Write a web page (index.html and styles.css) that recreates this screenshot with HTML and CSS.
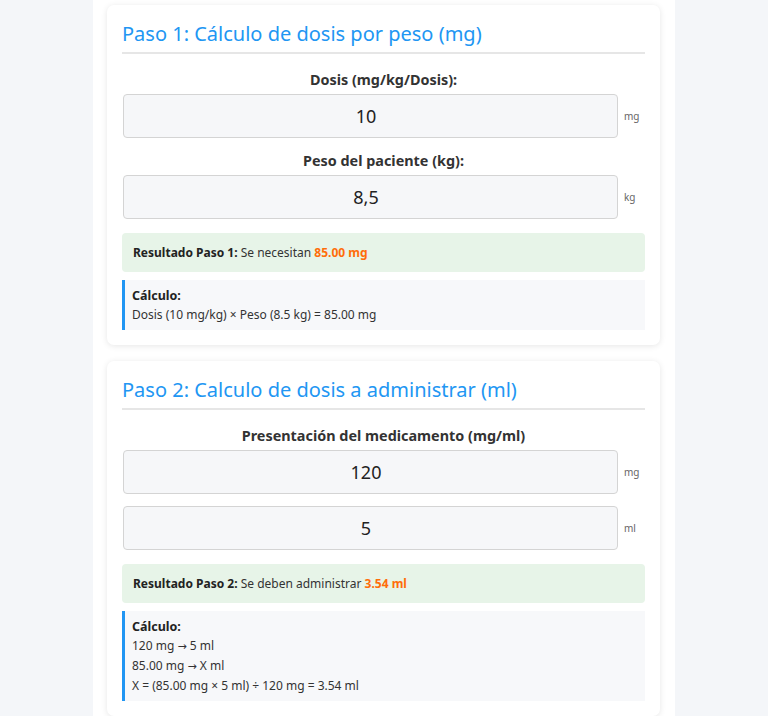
FILE: index.html
```html
<!DOCTYPE html>
<html lang="es">
<head>
  <meta charset="UTF-8">
  <meta name="viewport" content="width=device-width, initial-scale=1.0">
  <title>Calculadora de dosis</title>
  <link rel="stylesheet" href="styles.css">
</head>
<body>
  <div class="container">
    <!-- Paso 1 -->
    <div class="step">
      <h2>Paso 1: Cálculo de dosis por peso (mg)</h2>
      <div class="form-group">
        <label for="dosis">Dosis (mg/kg/Dosis):</label>
        <div class="input-row">
          <input type="text" id="dosis" value="10">
          <span class="unit">mg</span>
        </div>
      </div>
      <div class="form-group">
        <label for="peso">Peso del paciente (kg):</label>
        <div class="input-row">
          <input type="text" id="peso" value="8,5">
          <span class="unit">kg</span>
        </div>
      </div>
      <div class="result">
        <strong>Resultado Paso 1:</strong> Se necesitan <span class="highlight">85.00 mg</span>
      </div>
      <div class="calc">
        <strong>Cálculo:</strong><br>
        Dosis (10 mg/kg) × Peso (8.5 kg) = 85.00 mg
      </div>
    </div>

    <!-- Paso 2 -->
    <div class="step">
      <h2>Paso 2: Calculo de dosis a administrar (ml)</h2>
      <div class="form-group">
        <label for="conc_mg">Presentación del medicamento (mg/ml)</label>
        <div class="input-row">
          <input type="text" id="conc_mg" value="120">
          <span class="unit">mg</span>
        </div>
        <div class="input-row">
          <input type="text" id="conc_ml" value="5">
          <span class="unit">ml</span>
        </div>
      </div>
      <div class="result">
        <strong>Resultado Paso 2:</strong> Se deben administrar <span class="highlight">3.54 ml</span>
      </div>
      <div class="calc">
        <strong>Cálculo:</strong><br>
        120 mg <span class="arrow">→</span> 5 ml<br>
        85.00 mg <span class="arrow">→</span> X ml<br>
        X = (85.00 mg × 5 ml) ÷ 120 mg = 3.54 ml
      </div>
    </div>
  </div>
</body>
</html>
```

FILE: styles.css
```css
/* General */
body, h2 {
  margin: 0;
  padding: 0;
}
body {
  font-family: 'Noto Sans', 'Open Sans', sans-serif;
  background-color: #f4f6f9;
  color: #333;
}
.container {
  width: 582px;
  margin: 0 auto;
  padding: 5px 15px 0 14px;
  box-sizing: border-box;
  background-color: #fff;
  min-height: 716px;
}
.step {
  background-color: #fff;
  border-radius: 7px;
  box-shadow: 0 1px 6px rgba(0, 0, 0, 0.1);
  padding: 15px;
  margin-bottom: 16px;
}
.step h2 {
  font-size: 20px;
  font-weight: 400;
  color: #2196f3;
  line-height: 27px;
  padding-bottom: 5px;
  border-bottom: 2px solid #e6e6e6;
  margin-bottom: 16px;
}
.form-group {
  margin-bottom: 14px;
}
.form-group label {
  display: block;
  text-align: center;
  font-weight: 700;
  font-size: 14.4px;
  line-height: 20px;
  color: #333;
  margin-bottom: 4px;
}
.form-group + .form-group {
  margin-top: -1px;
}
.input-row {
  display: flex;
  align-items: center;
}
.input-row + .input-row {
  margin-top: 12px;
}
.input-row input {
  flex: 1;
  min-width: 0;
  height: 44px;
  box-sizing: border-box;
  margin-left: 1px;
  padding: 0 10px 0 1px;
  border: 1px solid #d4d4d4;
  border-radius: 4px;
  background-color: #f6f7f9;
  text-align: center;
  font-family: inherit;
  font-size: 18px;
  color: #222;
}
.unit {
  width: 21px;
  margin-left: 6px;
  font-size: 10px;
  color: #666;
}
.result {
  background-color: #e7f4e8;
  border-radius: 4px;
  padding: 10px 11px;
  font-size: 12px;
  line-height: 19px;
  margin-bottom: 8px;
}
.result strong {
  color: #222;
}
.highlight {
  color: #ff6d0a;
  font-weight: 700;
}
.calc {
  background-color: #f7f8fa;
  border-left: 3px solid #2196f3;
  padding: 6px 7px;
  font-size: 12px;
  line-height: 19px;
}
.calc strong {
  color: #222;
  font-size: 12.5px;
}
.arrow {
  font-family: 'DejaVu Sans', sans-serif;
  font-size: 11px;
}
```
